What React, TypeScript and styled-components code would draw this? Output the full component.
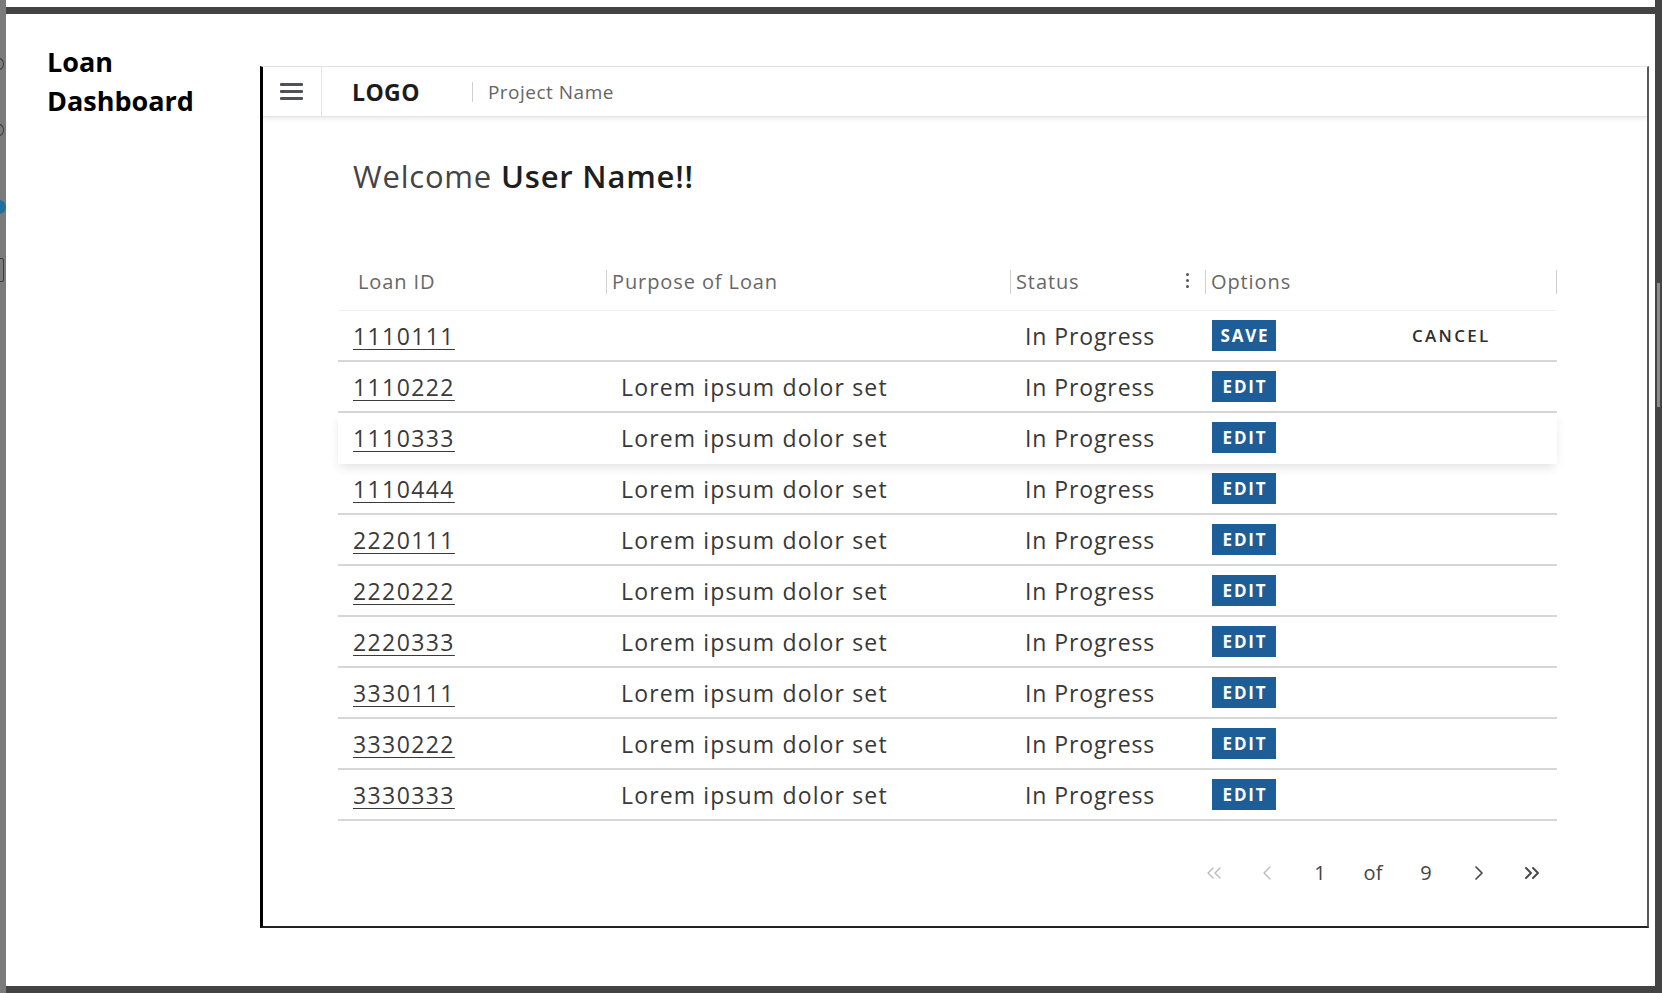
import React, { FC } from 'react';
import styled, { createGlobalStyle } from 'styled-components';
import { ChevronLeft, ChevronRight, ChevronsLeft, ChevronsRight } from 'lucide-react';

const GlobalStyle = createGlobalStyle`
  html, body {
    margin: 0;
    padding: 0;
    background: #ffffff;
  }
  * {
    box-sizing: border-box;
  }
`;

interface Loan {
  id: string;
  purpose: string;
  status: string;
  editing?: boolean;
  raised?: boolean;
}

const loans: Loan[] = [
  { id: '1110111', purpose: '', status: 'In Progress', editing: true },
  { id: '1110222', purpose: 'Lorem ipsum dolor set', status: 'In Progress' },
  { id: '1110333', purpose: 'Lorem ipsum dolor set', status: 'In Progress', raised: true },
  { id: '1110444', purpose: 'Lorem ipsum dolor set', status: 'In Progress' },
  { id: '2220111', purpose: 'Lorem ipsum dolor set', status: 'In Progress' },
  { id: '2220222', purpose: 'Lorem ipsum dolor set', status: 'In Progress' },
  { id: '2220333', purpose: 'Lorem ipsum dolor set', status: 'In Progress' },
  { id: '3330111', purpose: 'Lorem ipsum dolor set', status: 'In Progress' },
  { id: '3330222', purpose: 'Lorem ipsum dolor set', status: 'In Progress' },
  { id: '3330333', purpose: 'Lorem ipsum dolor set', status: 'In Progress' },
];

const App: FC = () => {
  return (
    <>
      <GlobalStyle />
      <Screen>
        <Rail>
          <RailGlyph top={58} />
          <RailGlyph top={124} />
          <RailDot />
          <RailBox />
        </Rail>
        <Stage>
          <TopGap />
          <Content>
            <Slide>
              <SlideTitle>
                Loan
                <br />
                Dashboard
              </SlideTitle>
              <Panel>
                <AppBar>
                  <MenuCell>
                    <MenuIcon>
                      <span />
                      <span />
                      <span />
                    </MenuIcon>
                  </MenuCell>
                  <Logo>LOGO</Logo>
                  <ProjectName>Project Name</ProjectName>
                </AppBar>
                <Body>
                  <Welcome>
                    Welcome <strong>User Name!!</strong>
                  </Welcome>
                  <Table>
                    <HeadRow>
                      <HeadCell first>Loan ID</HeadCell>
                      <HeadCell>Purpose of Loan</HeadCell>
                      <HeadCell>
                        Status
                        <Kebab>
                          <i />
                          <i />
                          <i />
                        </Kebab>
                      </HeadCell>
                      <HeadCell last>Options</HeadCell>
                    </HeadRow>
                    {loans.map(loan => (
                      <Row key={loan.id} raised={!!loan.raised}>
                        <Cell>
                          <LoanLink>{loan.id}</LoanLink>
                        </Cell>
                        <Cell>{loan.purpose}</Cell>
                        <Cell tight>{loan.status}</Cell>
                        <OptionsCell>
                          <ActionButton>{loan.editing ? 'SAVE' : 'EDIT'}</ActionButton>
                          {loan.editing && <CancelButton>CANCEL</CancelButton>}
                        </OptionsCell>
                      </Row>
                    ))}
                  </Table>
                  <Pager>
                    <PagerIcon muted>
                      <ChevronsLeft size={24} strokeWidth={1.3} />
                    </PagerIcon>
                    <PagerIcon muted>
                      <ChevronLeft size={24} strokeWidth={1.3} />
                    </PagerIcon>
                    <PagerText>1</PagerText>
                    <PagerText>of</PagerText>
                    <PagerText>9</PagerText>
                    <PagerIcon>
                      <ChevronRight size={24} strokeWidth={1.7} />
                    </PagerIcon>
                    <PagerIcon>
                      <ChevronsRight size={24} strokeWidth={2} />
                    </PagerIcon>
                  </Pager>
                </Body>
              </Panel>
            </Slide>
          </Content>
          <BottomBar />
        </Stage>
        <ScrollStrip>
          <Thumb />
        </ScrollStrip>
      </Screen>
    </>
  );
};

const Screen = styled.div`
  display: flex;
  width: 1662px;
  height: 993px;
  overflow: hidden;
  background: #ffffff;
`;

const Rail = styled.div`
  position: relative;
  width: 6px;
  flex: none;
  background: #7b7b7b;
  overflow: hidden;
`;

const RailGlyph = styled.div<{ top: number }>`
  position: absolute;
  left: -6px;
  top: ${p => p.top}px;
  width: 10px;
  height: 12px;
  border: 1.5px solid #3a3a3a;
  border-radius: 50%;
`;

const RailDot = styled.div`
  position: absolute;
  left: -8px;
  top: 200px;
  width: 14px;
  height: 14px;
  border-radius: 50%;
  background: #1f6e9e;
`;

const RailBox = styled.div`
  position: absolute;
  left: -6px;
  top: 258px;
  width: 10px;
  height: 24px;
  border: 1.5px solid #3a3a3a;
  border-radius: 2px;
`;

const Stage = styled.div`
  flex: 1;
  display: flex;
  flex-direction: column;
`;

const TopGap = styled.div`
  height: 7px;
  flex: none;
  background: #ffffff;
  border-bottom: 7px solid #444444;
  box-sizing: content-box;
`;

const Content = styled.div`
  flex: 1;
  display: flex;
  flex-direction: column;
`;

const BottomBar = styled.div`
  height: 7px;
  flex: none;
  background: #444444;
`;

const ScrollStrip = styled.div`
  width: 7px;
  flex: none;
  background: #444444;
  padding: 283px 2px 0 2px;
`;

const Thumb = styled.div`
  width: 3px;
  height: 124px;
  background: #8c8c8c;
`;

const Slide = styled.div`
  display: flex;
  padding: 52px 6px 0 0;
`;

const SlideTitle = styled.h1`
  width: 254px;
  flex: none;
  margin: -24px 0 0 0;
  padding-left: 41px;
  font-family: 'Open Sans', 'Noto Sans', sans-serif;
  font-size: 27px;
  font-weight: 700;
  line-height: 39px;
  color: #000000;
`;

const Panel = styled.div`
  flex: 1;
  height: 862px;
  display: flex;
  flex-direction: column;
  border-left: 3px solid #000000;
  border-bottom: 2px solid #222222;
  border-right: 2px solid #5a5a5a;
  border-top: 1px solid #e4e4e4;
  font-family: 'Open Sans', 'Noto Sans', sans-serif;
`;

const AppBar = styled.div`
  height: 50px;
  flex: none;
  display: flex;
  align-items: center;
  background: #ffffff;
  border-bottom: 1px solid #e2e2e2;
  box-shadow: 0 2px 4px rgba(0, 0, 0, 0.08);
`;

const MenuCell = styled.div`
  width: 59px;
  height: 100%;
  flex: none;
  display: flex;
  align-items: center;
  justify-content: center;
  border-right: 1px solid #e4e4e4;
`;

const MenuIcon = styled.div`
  display: flex;
  flex-direction: column;
  gap: 4px;
  margin: 0 2px 0 0;

  span {
    display: block;
    width: 23px;
    height: 3px;
    border-radius: 1px;
    background: #505258;
  }
`;

const Logo = styled.div`
  margin-left: 30px;
  padding-right: 52px;
  font-size: 23px;
  font-weight: 700;
  letter-spacing: 0.4px;
  color: #1c1c1c;
`;

const ProjectName = styled.div`
  display: flex;
  align-items: center;
  font-size: 19px;
  letter-spacing: 0.5px;
  color: #666666;

  &::before {
    content: '';
    width: 1px;
    height: 20px;
    margin-right: 15px;
    background: #d0d0d0;
  }
`;

const Body = styled.div`
  flex: 1;
  display: flex;
  flex-direction: column;
  padding: 39px 0 0 75px;
`;

const Welcome = styled.div`
  margin-left: 15px;
  font-size: 31px;
  letter-spacing: 0.8px;
  color: #444444;
  line-height: 40px;

  strong {
    font-weight: 600;
    color: #1e1e1e;
  }
`;

const Table = styled.div`
  width: 1219px;
  margin-top: 60px;
  display: flex;
  flex-direction: column;
`;

const columns = '268px 404px 195px 352px';

const HeadRow = styled.div`
  display: grid;
  grid-template-columns: ${columns};
  height: 51px;
  padding-bottom: 3px;
  box-sizing: content-box;
  align-items: center;
  border-bottom: 1px solid #efefef;
`;

const HeadCell = styled.div<{ first?: boolean; last?: boolean }>`
  position: relative;
  display: flex;
  align-items: center;
  height: 24px;
  padding-left: ${p => (p.first ? '20px' : '5px')};
  font-size: 20px;
  letter-spacing: 0.9px;
  color: #676767;
  border-left: ${p => (p.first ? 'none' : '1px solid #cfcfcf')};
  border-right: ${p => (p.last ? '1px solid #cfcfcf' : 'none')};
`;

const Kebab = styled.span`
  position: absolute;
  right: 16px;
  top: 3px;
  display: flex;
  flex-direction: column;
  gap: 3px;

  i {
    display: block;
    width: 3px;
    height: 3px;
    border-radius: 50%;
    background: #555555;
  }
`;

const Row = styled.div<{ raised: boolean }>`
  display: grid;
  grid-template-columns: ${columns};
  height: 51px;
  align-items: center;
  border-bottom: 2px solid ${p => (p.raised ? 'transparent' : '#d6d6d6')};
  box-shadow: ${p => (p.raised ? '0 5px 10px -2px rgba(0, 0, 0, 0.12)' : 'none')};
  position: relative;
`;

const Cell = styled.div<{ tight?: boolean }>`
  padding-left: 15px;
  font-size: 23px;
  letter-spacing: ${p => (p.tight ? '0.9px' : '1.15px')};
  color: #383838;
  white-space: nowrap;
`;

const LoanLink = styled.span`
  text-decoration: underline;
  text-decoration-thickness: 1px;
  text-underline-offset: 4px;
  letter-spacing: 1.4px;
  color: #3a3a3a;
`;

const OptionsCell = styled.div`
  display: flex;
  align-items: center;
  padding-left: 7px;
`;

const ActionButton = styled.button`
  width: 64px;
  height: 31px;
  border: none;
  padding: 0 0 0 2px;
  background: #1d5e98;
  color: #ffffff;
  font-family: 'Open Sans', 'Noto Sans', sans-serif;
  font-size: 17px;
  font-weight: 700;
  letter-spacing: 1.8px;
  cursor: pointer;
`;

const CancelButton = styled.button`
  margin-left: 136px;
  border: none;
  padding: 0;
  background: transparent;
  color: #2e2e2e;
  font-family: 'Open Sans', 'Noto Sans', sans-serif;
  font-size: 17px;
  font-weight: 600;
  letter-spacing: 2.3px;
  cursor: pointer;
`;

const Pager = styled.div`
  width: 1219px;
  display: flex;
  align-items: center;
  justify-content: flex-end;
  gap: 23px;
  margin-top: 38px;
  padding-right: 10px;
`;

const PagerIcon = styled.span<{ muted?: boolean }>`
  display: flex;
  width: 30px;
  justify-content: center;
  color: ${p => (p.muted ? '#b9b9b9' : '#4a4a4a')};
`;

const PagerText = styled.span`
  width: 30px;
  text-align: center;
  font-size: 20px;
  color: #444444;
`;

export default App;
